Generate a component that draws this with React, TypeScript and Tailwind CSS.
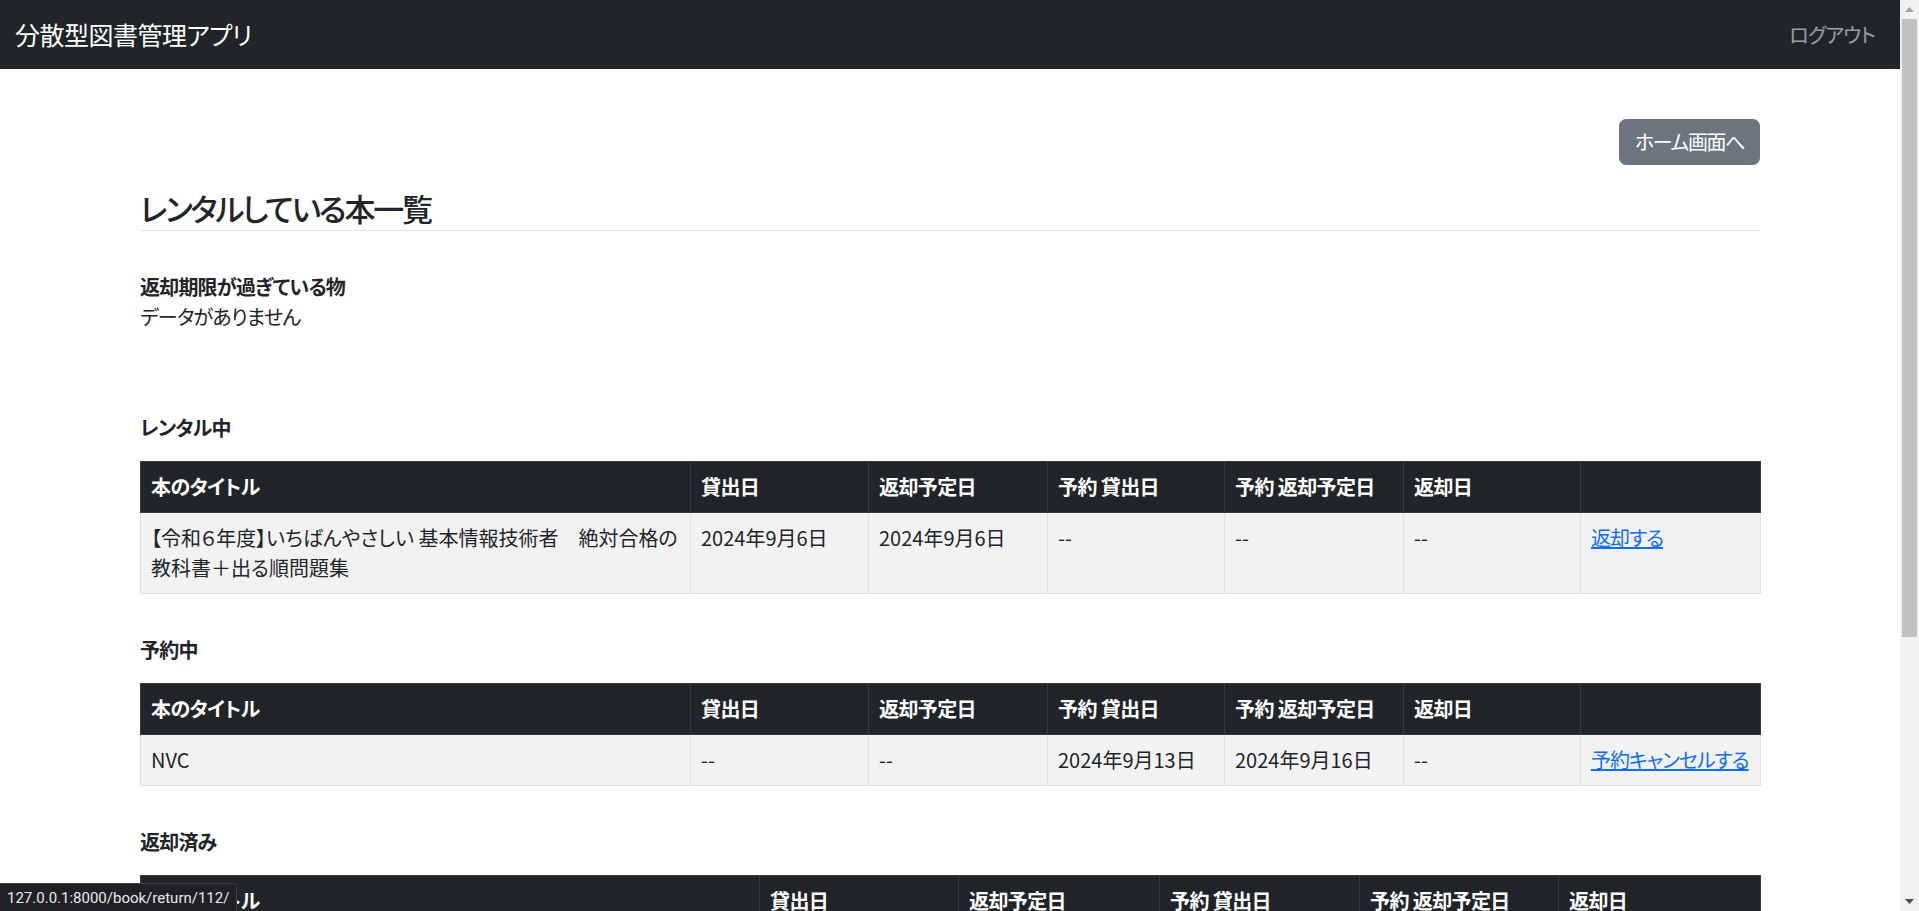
import React from 'react';

type Row = {
  title: string;
  lent: string;
  due: string;
  reserveLent: string;
  reserveDue: string;
  returned: string;
  action?: string;
};

const rentals: Row[] = [
  {
    title: '【令和６年度】いちばんやさしい 基本情報技術者　絶対合格の教科書＋出る順問題集',
    lent: '2024年9月6日',
    due: '2024年9月6日',
    reserveLent: '--',
    reserveDue: '--',
    returned: '--',
    action: '返却する',
  },
];

const reservations: Row[] = [
  {
    title: 'NVC',
    lent: '--',
    due: '--',
    reserveLent: '2024年9月13日',
    reserveDue: '2024年9月16日',
    returned: '--',
    action: '予約キャンセルする',
  },
];

const returnedBooks: Row[] = [
  { title: 'リーダブルコード', lent: '2024年8月20日', due: '2024年8月27日', reserveLent: '--', reserveDue: '--', returned: '2024年8月26日' },
  { title: 'NVC', lent: '2024年8月5日', due: '2024年8月12日', reserveLent: '2024年8月1日', reserveDue: '2024年8月5日', returned: '2024年8月10日' },
  { title: 'Python実践入門', lent: '2024年7月22日', due: '2024年7月29日', reserveLent: '--', reserveDue: '--', returned: '2024年7月28日' },
  { title: 'Webを支える技術', lent: '2024年7月10日', due: '2024年7月17日', reserveLent: '--', reserveDue: '--', returned: '2024年7月15日' },
  { title: 'プログラマが知るべき97のこと', lent: '2024年6月30日', due: '2024年7月7日', reserveLent: '--', reserveDue: '--', returned: '2024年7月5日' },
  { title: '達人に学ぶSQL徹底指南書', lent: '2024年6月12日', due: '2024年6月19日', reserveLent: '--', reserveDue: '--', returned: '2024年6月18日' },
];

const headers = ['本のタイトル', '貸出日', '返却予定日', '予約 貸出日', '予約 返却予定日', '返却日'];

const BookTable: React.FC<{ rows: Row[]; widths: number[]; withAction?: boolean }> = ({
  rows,
  widths,
  withAction,
}) => (
  <table className="w-full table-fixed border-collapse mb-[20px]">
    <colgroup>
      {widths.map((w, i) => (
        <col key={i} style={{ width: w }} />
      ))}
    </colgroup>
    <thead>
      <tr>
        {headers.map((h) => (
          <th
            key={h}
            className="bg-[#212529] text-white text-left font-bold align-bottom px-[10px] py-[10px] border border-[#373b3e] whitespace-nowrap tracking-[-0.03em]"
          >
            {h}
          </th>
        ))}
        {withAction && <th className="bg-[#212529] px-[10px] py-[10px] border border-[#373b3e]"></th>}
      </tr>
    </thead>
    <tbody>
      {rows.map((r, i) => (
        <tr key={i} className={i % 2 === 0 ? 'bg-[#f2f2f2]' : 'bg-white'}>
          {[r.title, r.lent, r.due, r.reserveLent, r.reserveDue, r.returned].map((v, j) => (
            <td key={j} className="align-top px-[10px] py-[10px] border border-[#dee2e6]">
              {v}
            </td>
          ))}
          {withAction && (
            <td className="align-top px-[10px] py-[10px] border border-[#dee2e6] whitespace-nowrap">
              <a href="#" className="text-[#0d6efd] underline tracking-[-0.05em]">
                {r.action}
              </a>
            </td>
          )}
        </tr>
      ))}
    </tbody>
  </table>
);

// the browser's own scrollbar, as it stands in the screenshot
const FakeScrollbar: React.FC = () => (
  <div className="fixed top-0 right-0 h-screen w-[19px] bg-[#f1f1f1] flex flex-col items-center">
    <div className="h-[19px] w-full flex items-center justify-center">
      <svg width="9" height="5" viewBox="0 0 9 5">
        <path d="M0 5 L4.5 0 L9 5 Z" fill="#a3a3a3" />
      </svg>
    </div>
    <div className="h-[618px] w-[15px] bg-[#c1c1c1]"></div>
    <div className="flex-1"></div>
    <div className="h-[19px] w-full flex items-center justify-center">
      <svg width="9" height="5" viewBox="0 0 9 5">
        <path d="M0 0 L4.5 5 L9 0 Z" fill="#505050" />
      </svg>
    </div>
  </div>
);

const App: React.FC = () => {
  return (
    <div className="min-h-screen bg-white text-[#212529] font-['Noto_Sans_CJK_JP',sans-serif] [font-feature-settings:'palt'] text-[20px] leading-[30px]">
      <div className="mr-[19px]">
        <nav className="h-[69px] bg-[#212529] flex items-center justify-between px-[15px]">
          <a href="#" className="text-white text-[25px] leading-[37px] tracking-[-0.02em]">
            分散型図書管理アプリ
          </a>
          <a href="#" className="px-[10px] text-white/55 tracking-[-0.04em]">
            ログアウト
          </a>
        </nav>

        <main className="mx-auto max-w-[1650px] px-[15px] pb-[40px]">
          <div className="flex justify-end pt-[50px]">
            <button className="bg-[#6c757d] border border-[#6c757d] text-white rounded-[7px] px-[15px] py-[7px] leading-[30px] tracking-[-0.07em]">
              ホーム画面へ
            </button>
          </div>

          <h4 className="mt-[24px] text-[31px] leading-[37px] font-medium pb-[4px] border-b border-[#dee2e6] tracking-[-0.07em]">
            レンタルしている本一覧
          </h4>

          <h6 className="mt-[41px] font-semibold tracking-[-0.04em]">返却期限が過ぎている物</h6>
          <p className="tracking-[-0.04em]">データがありません</p>

          <h6 className="mt-[81px] mb-[18px] font-semibold tracking-[-0.04em]">レンタル中</h6>
          <BookTable rows={rentals} widths={[550, 178, 179, 177, 179, 177, 180]} withAction />

          <h6 className="mt-[41px] mb-[18px] font-semibold tracking-[-0.04em]">予約中</h6>
          <BookTable rows={reservations} widths={[550, 178, 179, 177, 179, 177, 180]} withAction />

          <h6 className="mt-[41px] mb-[18px] font-semibold tracking-[-0.04em]">返却済み</h6>
          <BookTable rows={returnedBooks} widths={[619, 199, 201, 200, 199, 202]} />
        </main>
      </div>

      <FakeScrollbar />

      <div className="fixed bottom-0 left-0 h-[28px] flex items-center px-[7px] bg-[#202124] text-[#e8eaed] text-[15px] font-['Roboto',sans-serif] rounded-tr-[4px] border-t border-r border-[#3c4043]">
        127.0.0.1:8000/book/return/112/
      </div>
    </div>
  );
};

export default App;
